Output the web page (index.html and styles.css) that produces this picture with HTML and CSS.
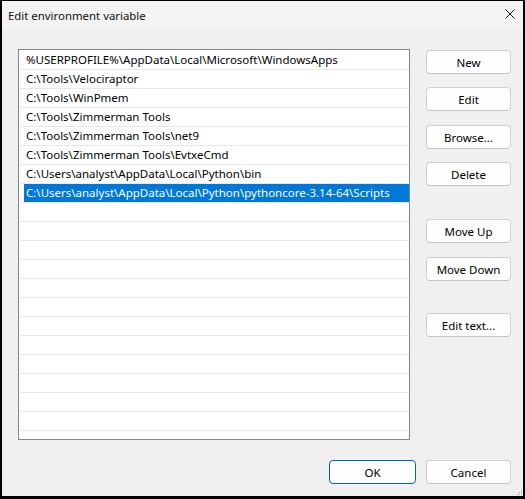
FILE: index.html
```html
<!DOCTYPE html>
<html lang="en">
<head>
<meta charset="utf-8">
<title>Edit environment variable</title>
<link rel="stylesheet" href="styles.css">
</head>
<body>
<div class="window">
  <div class="titlebar">
    <span class="title">Edit environment variable</span>
    <button class="close" aria-label="Close">
      <svg width="10" height="10" viewBox="0 0 10 10"><path d="M0.5 0.5 L9.5 9.5 M9.5 0.5 L0.5 9.5" stroke="#1a1a1a" stroke-width="1" fill="none"/></svg>
    </button>
  </div>
  <div class="content">
    <div class="main">
      <div class="list">
        <div class="row"><span class="cell">%USERPROFILE%\AppData\Local\Microsoft\WindowsApps</span></div>
        <div class="row"><span class="cell">C:\Tools\Velociraptor</span></div>
        <div class="row"><span class="cell">C:\Tools\WinPmem</span></div>
        <div class="row"><span class="cell">C:\Tools\Zimmerman Tools</span></div>
        <div class="row"><span class="cell">C:\Tools\Zimmerman Tools\net9</span></div>
        <div class="row"><span class="cell">C:\Tools\Zimmerman Tools\EvtxeCmd</span></div>
        <div class="row"><span class="cell">C:\Users\analyst\AppData\Local\Python\bin</span></div>
        <div class="row selected"><span class="cell">C:\Users\analyst\AppData\Local\Python\pythoncore-3.14-64\Scripts</span></div>
        <div class="row"><span class="cell"></span></div>
        <div class="row"><span class="cell"></span></div>
        <div class="row"><span class="cell"></span></div>
        <div class="row"><span class="cell"></span></div>
        <div class="row"><span class="cell"></span></div>
        <div class="row"><span class="cell"></span></div>
        <div class="row"><span class="cell"></span></div>
        <div class="row"><span class="cell"></span></div>
        <div class="row"><span class="cell"></span></div>
        <div class="row"><span class="cell"></span></div>
        <div class="row"><span class="cell"></span></div>
        <div class="row"><span class="cell"></span></div>
        <div class="row"><span class="cell"></span></div>
      </div>
      <div class="actions">
        <button class="btn b-new">New</button>
        <button class="btn b-edit">Edit</button>
        <button class="btn b-browse">Browse...</button>
        <button class="btn b-delete">Delete</button>
        <button class="btn b-up">Move Up</button>
        <button class="btn b-down">Move Down</button>
        <button class="btn b-text">Edit text...</button>
      </div>
    </div>
    <div class="footer">
      <button class="btn default">OK</button>
      <button class="btn">Cancel</button>
    </div>
  </div>
  <svg class="grip" width="6" height="6" viewBox="0 0 6 6">
    <rect x="4" y="0" width="1" height="1" fill="#a0a0a0"/>
    <rect x="2" y="2" width="1" height="1" fill="#a0a0a0"/>
    <rect x="4" y="2" width="1" height="1" fill="#a0a0a0"/>
    <rect x="0" y="4" width="1" height="1" fill="#a0a0a0"/>
    <rect x="2" y="4" width="1" height="1" fill="#a0a0a0"/>
    <rect x="4" y="4" width="1" height="1" fill="#a0a0a0"/>
  </svg>
</div>
</body>
</html>
```
FILE: styles.css
```css
html, body {
  margin: 0;
  padding: 0;
  background: #000;
}

body {
  width: 525px;
  height: 499px;
  overflow: hidden;
  font-family: "Noto Sans", "Open Sans", sans-serif;
  font-size: 11.5px;
  color: #000;
}

.window {
  position: relative;
  margin: 1px 2px 0 2px;
  height: 495px;
  background: #f0f0f0;
  display: flex;
  flex-direction: column;
}

.titlebar {
  height: 28px;
  display: flex;
  align-items: center;
  justify-content: space-between;
  background: #f3f3f3;
  padding-left: 6px;
}

.title {
  font-size: 11.4px;
  color: #111;
}

.close {
  width: 46px;
  height: 28px;
  border: 0;
  background: transparent;
  display: flex;
  align-items: center;
  justify-content: center;
  padding: 0;
  margin-right: -2px;
}

.close svg {
  margin-left: 16px;
  margin-top: -2px;
}

.content {
  padding: 20px 12px 0 16px;
  display: flex;
  flex-direction: column;
}

.main {
  display: flex;
  align-items: flex-start;
  gap: 16px;
}

.list {
  width: 390px;
  height: 388px;
  border: 1px solid #828790;
  background: #fff;
  padding-top: 1px;
  box-sizing: content-box;
  overflow: hidden;
  display: flex;
  flex-direction: column;
}

.row {
  flex: none;
  height: 18px;
  margin-left: 1px;
  padding-left: 4px;
  border-bottom: 1px solid #e8e8e8;
  display: flex;
}

.cell {
  flex: 1;
  padding-left: 2px;
  line-height: 18px;
  white-space: nowrap;
}

.row.selected .cell {
  background: #0078d7;
  color: #fff;
}

.actions {
  display: flex;
  flex-direction: column;
  width: 85px;
}

.btn {
  font-family: inherit;
  font-size: 11.5px;
  color: #000;
  width: 85px;
  height: 24px;
  padding: 0;
  background: #fdfdfd;
  border: 1px solid #d0d0d0;
  border-bottom-color: #c4c4c4;
  border-radius: 4px;
}

.b-new { margin-top: 1px; }
.b-edit { margin-top: 13px; }
.b-browse { margin-top: 14px; }
.b-delete { margin-top: 13px; }
.b-up { margin-top: 33px; }
.b-down { margin-top: 14px; }
.b-text { margin-top: 32px; }

.footer {
  display: flex;
  justify-content: flex-end;
  gap: 10px;
  margin-top: 20px;
}

.btn.default {
  width: 87px;
  border: 1px solid #0067c0;
}

.grip {
  position: absolute;
  right: 0;
  bottom: 0;
}
```
